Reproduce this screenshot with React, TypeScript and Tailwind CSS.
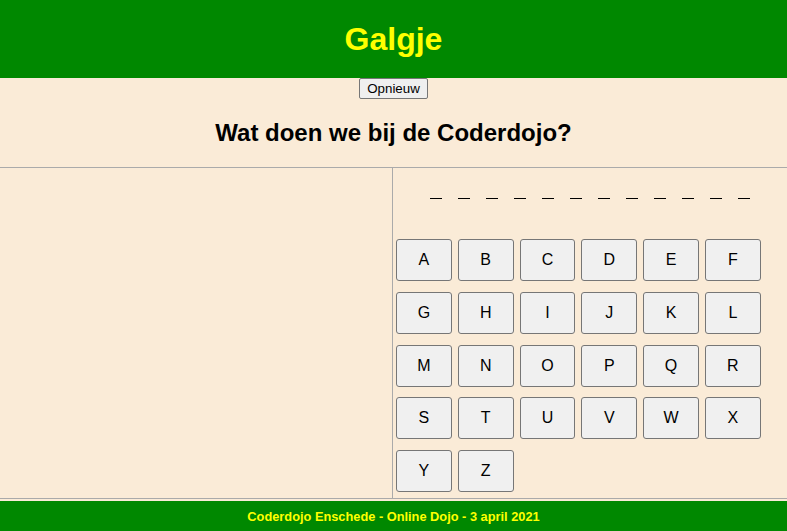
const letters = "ABCDEFGHIJKLMNOPQRSTUVWXYZ".split("")
const word = Array.from({ length: 12 })

export default function App() {
  return (
    <div className="min-h-[531px] bg-[#faebd7] font-['Liberation_Sans',Arial,sans-serif] text-black flex flex-col">
      <header className="h-[78px] bg-[#008800] flex items-center justify-center">
        <h1 className="text-[32px] font-bold text-[#ffff00] leading-none">Galgje</h1>
      </header>

      <div className="flex justify-center">
        <button className="h-[21px] px-[7px] text-[13.33px] leading-none bg-[#efefef] border border-[#767676] rounded-[2px]">
          Opnieuw
        </button>
      </div>

      <h2 className="h-[68px] flex items-center justify-center text-[24px] font-bold leading-none pb-[1px]">
        Wat doen we bij de Coderdojo?
      </h2>

      <div className="flex border-t border-b border-[#aaaaaa] h-[332px]">
        <div className="w-[393px] border-r border-[#aaaaaa]" />
        <div className="flex-1">
          <div className="h-[71px] flex justify-center gap-[16px] pt-[30px]">
            {word.map((_, i) => (
              <span key={i} className="w-[12px] h-[1px] bg-black" />
            ))}
          </div>
          <div className="pl-[3px] grid grid-cols-[repeat(6,55.8px)] gap-x-[6px] gap-y-[10.8px]">
            {letters.map((l) => (
              <button
                key={l}
                className="h-[42px] text-[16px] bg-[#f0f0f0] border border-[#767676] rounded-[3px] leading-none"
              >
                {l}
              </button>
            ))}
          </div>
        </div>
      </div>

      <footer className="mt-[2px] h-[31px] bg-[#008800] flex items-center justify-center">
        <p className="text-[12.8px] font-bold text-[#ffff00]">Coderdojo Enschede - Online Dojo - 3 april 2021</p>
      </footer>
    </div>
  )
}
